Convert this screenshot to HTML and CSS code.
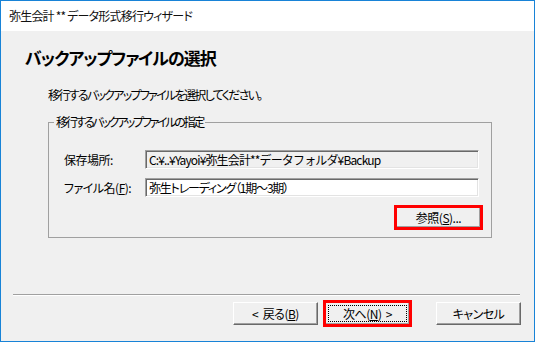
FILE: index.html
```html
<!DOCTYPE html>
<html lang="ja">
<head>
  <meta charset="UTF-8">
  <meta name="viewport" content="width=device-width, initial-scale=1.0">
  <title>弥生会計 ** データ形式移行ウィザード</title>
  <link rel="stylesheet" href="styles.css">
</head>
<body>
  <div class="window">
    <div class="titlebar">弥生会計 ** データ形式移行ウィザード</div>
    <div class="content">
      <h1 class="heading">バックアップファイルの選択</h1>
      <p class="lead">移行するバックアップファイルを選択してください。</p>
      <fieldset class="group">
        <legend>移行するバックアップファイルの指定</legend>
        <div class="row">
          <label class="label">保存場所:</label>
          <div class="field readonly">C:¥..¥Yayoi¥弥生会計**データフォルダ¥Backup</div>
        </div>
        <div class="row">
          <label class="label">ファイル名(<u>F</u>):</label>
          <div class="field name">弥生トレーディング（1期～3期）</div>
        </div>
        <div class="row-end">
          <button class="btn marked" type="button">参照(<u>S</u>)...</button>
        </div>
      </fieldset>
      <div class="separator"></div>
      <div class="actions">
        <button class="btn" type="button">&lt;&nbsp; 戻る(<u>B</u>)</button>
        <button class="btn marked default" type="button"><span class="focus">次へ(<u>N</u>)&nbsp; &gt;</span></button>
        <button class="btn cancel" type="button">キャンセル</button>
      </div>
    </div>
  </div>
</body>
</html>
```

FILE: styles.css
```css
body {
  margin: 0;
  font-family: "Noto Sans CJK JP", "Noto Sans", sans-serif;
  font-size: 12px;
  color: #000;
}
.window {
  width: 535px;
  height: 342px;
  box-sizing: border-box;
  border: 1px solid #1883d7;
  background: #f0f0f0;
  display: flex;
  flex-direction: column;
}
.titlebar {
  height: 30px;
  line-height: 30px;
  padding-left: 8px;
  background: #fff;
  color: #111;
  font-feature-settings: "palt";
  letter-spacing: -0.8px;
}
.content {
  flex: 1;
  display: flex;
  flex-direction: column;
}
.heading {
  margin: 18px 0 0 24px;
  font-size: 17px;
  line-height: 18px;
  font-weight: bold;
  font-feature-settings: "palt";
  letter-spacing: -1px;
}
.lead {
  margin: 21px 0 0 47px;
  line-height: 14px;
  font-feature-settings: "palt";
  letter-spacing: -1.7px;
}
.group {
  margin: 13px 0 0 47px;
  width: 444px;
  box-sizing: border-box;
  border: 1px solid #a0a0a0;
  padding: 21px 12px 9px 15px;
  min-width: 0;
}
.group legend {
  margin-left: -10px;
  padding: 0 2px;
  line-height: 14px;
  font-feature-settings: "palt";
  letter-spacing: -2.3px;
}
.row {
  display: flex;
  align-items: center;
  margin-bottom: 9px;
}
.label {
  width: 81px;
  font-feature-settings: "palt";
  letter-spacing: -0.5px;
}
.field {
  width: 334px;
  height: 19px;
  box-sizing: border-box;
  border: 1px solid;
  border-color: #a0a0a0 #fff #fff #a0a0a0;
  box-shadow: inset 1px 1px #696969, inset -1px -1px #e3e3e3;
  background: #fff;
  padding: 0 3px;
  line-height: 17px;
  white-space: nowrap;
  overflow: hidden;
  letter-spacing: -0.85px;
}
.field.readonly {
  background: #f0f0f0;
}
.field.name {
  font-feature-settings: "palt";
  letter-spacing: -1.2px;
}
.row-end {
  display: flex;
  justify-content: flex-end;
  margin: 10px -2px 0 0;
}
.btn {
  width: 85px;
  height: 21px;
  box-sizing: border-box;
  border: 1px solid;
  border-color: #fff #696969 #696969 #fff;
  box-shadow: inset -1px -1px #a0a0a0;
  background: #f0f0f0;
  font: inherit;
  font-feature-settings: "palt";
  letter-spacing: -0.5px;
  padding: 0;
  color: #000;
}
.marked {
  outline: 3px solid #f00;
  outline-offset: -1px;
}
.separator {
  margin: 56px 14px 0 12px;
  border-top: 1px solid #a0a0a0;
  border-bottom: 1px solid #fff;
}
.actions {
  display: flex;
  justify-content: flex-end;
  gap: 7px;
  margin-top: 6px;
  padding-right: 13px;
}
.actions .btn {
  height: 23px;
}
.actions .cancel {
  margin-left: 19px;
}
.default .focus {
  display: block;
  margin: 2px;
  border: 1px dotted #000;
  line-height: 15px;
}
```
